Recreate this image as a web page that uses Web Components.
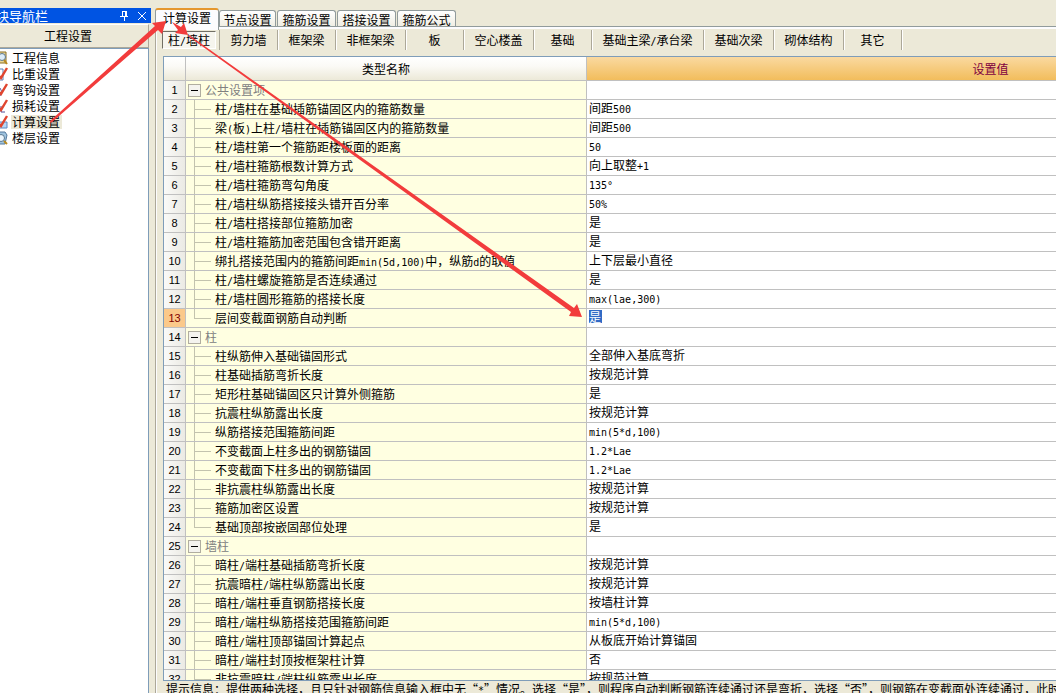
<!DOCTYPE html>
<html lang="zh-CN">
<head>
<meta charset="utf-8">
<title>计算设置</title>
<style>
html, body { height: 100%; margin: 0; }
body { font: 12px/16px "Noto Sans CJK SC", sans-serif; color: #000; background: #ece9d8; overflow: hidden; }
</style>
</head>
<body>
<settings-app></settings-app>
<script>
const LATIN = '.l{font-family:"DejaVu Sans Mono",monospace;font-size:10px;line-height:12px}';
const mix = s => s.replace(/[\x20-\x7e°]+/g, m => `<span class="l">${m}</span>`);
const RESET = `*{box-sizing:border-box}
button{font:inherit;color:inherit;background:none;border:0;margin:0;padding:0;white-space:nowrap;cursor:default}
${LATIN}`;
class Base extends HTMLElement {
  constructor() { super(); this.attachShadow({ mode: 'open' }); }
  connectedCallback() { this.shadowRoot.innerHTML = `<style>${RESET}${this.css()}</style>${this.html()}`; }
}

customElements.define('nav-item', class extends Base {
  css() { return `:host{display:flex;height:16px;align-items:center}
    svg{width:9px;height:16px;flex:none;margin-right:2px}
    a{color:inherit;text-decoration:none;padding:0 2px 0 1px;line-height:14px;height:14px;white-space:nowrap}
    :host([active]) a{background:#ece9d8}`; }
  html() {
    const tick = '<path d="M-2 9L1 12L7 2" fill="none" stroke="#e0452f" stroke-width="2.4"/>';
    const icons = {
      info: '<path d="M-1 2H6V13H-1" fill="#e8d79a" stroke="#8b6f22"/><circle cx="2" cy="7" r="3.5" fill="#dcecf8" stroke="#5a7890"/><path d="M4 10L7 14" stroke="#b88a20" stroke-width="2"/>',
      page: '<path d="M-1 3H3V14H-1" fill="#fff" stroke="#5b7db5"/>' + tick,
      hook: '<path d="M0 6L2 10L0 14" fill="none" stroke="#5b5fa8"/>' + tick,
      loss: '<path d="M1 8V14H5" fill="none" stroke="#4c4c98"/>' + tick,
      calc: '<path d="M-1 8H7V14H-1" fill="#b7d6f5" stroke="#5a8ac6"/>' + tick,
      floor: '<path d="M-1 2H5L7 5L5 14H-1Z" fill="#9ec3df" stroke="#55799c"/><circle cx="1" cy="8" r="3.5" fill="#eef6fc" stroke="#5a7890"/><path d="M4 11L7 14" stroke="#b88a20" stroke-width="2"/>'
    };
    return `<svg viewBox="0 0 9 16" aria-hidden="true">${icons[this.getAttribute('icon')]}</svg><a href="#"><slot></slot></a>`;
  }
});

customElements.define('nav-panel', class extends Base {
  css() { return `:host{display:flex;flex-direction:column;min-height:0;overflow:hidden}
    .bar{display:flex;align-items:center;height:15px;background:#0054e3;color:#fff;gap:8px;padding-right:4px;flex:none}
    .bar span{flex:1;font-size:13px;line-height:15px;margin-left:-4px;white-space:nowrap}
    .bar button{width:10px;height:11px;display:block}
    .bar svg{display:block}
    .head{height:24px;margin:1px 2px 0 0;border:1px solid #aca899;border-left:0;border-top-color:#fff;flex:none;padding-right:12px;text-align:center;line-height:20px}
    .list{flex:1;background:#fff;border-top:1px solid #7f9db9;border-right:1px solid #7f9db9;margin-right:2px;padding-top:1px}`; }
  html() { return `<div class="bar"><span>块导航栏</span>
    <button aria-label="固定"><svg width="10" height="11" fill="none" stroke="#fff"><path d="M3.5 1V6M3 1.5H7M6.5 1V6M7.5 1V6M1 6.5H9M5.5 7V11"/></svg></button>
    <button aria-label="关闭"><svg width="10" height="11" fill="none" stroke="#fff"><path d="M1 2L9 10M9 2L1 10"/></svg></button></div>
    <button class="head">工程设置</button><nav class="list"><slot></slot></nav>`; }
});

customElements.define('main-tabs', class extends Base {
  css() { return `:host{display:flex;align-items:flex-end;height:19px;gap:1px;flex:none}
    button{height:17px;width:59px;background:linear-gradient(#fff,#efede2);border:1px solid #919b9c;border-bottom:0;border-radius:3px 3px 0 0;line-height:15px}
    button:nth-of-type(2){width:57px}
    button[aria-selected=true]{width:64px;height:22px;margin-bottom:-3px;margin-right:-1px;background:#fcfcfe;border-top:2px solid #e5972d;line-height:12px;padding-bottom:5px;position:relative;z-index:1}`; }
  html() { return ['计算设置','节点设置','箍筋设置','搭接设置','箍筋公式'].map((t,i)=>`<button role="tab" aria-selected="${!i}">${t}</button>`).join(''); }
});

customElements.define('member-tabs', class extends Base {
  css() { return `:host{display:flex;height:20px;margin:1px 0 6px 6px;flex:none}
    button{flex:none;height:20px;border-right:1px solid #aca899;box-shadow:1px 0 #fff;line-height:20px}
    button:first-of-type{height:18px;margin:1px 3px 0 0;line-height:16px;border:1px solid #fff;border-top-color:#716f64;border-left-color:#716f64;background:#f6f5ee;box-shadow:none}
    button:nth-of-type(2){border-left:1px solid #aca899}`; }
  html() { return [['柱/墙柱',54],['剪力墙',59],['框架梁',58],['非框架梁',70],['板',58],['空心楼盖',70],['基础',58],['基础主梁/承台梁',112],['基础次梁',70],['砌体结构',70],['其它',58]]
    .map(([t,w])=>`<button style="width:${w}px">${mix(t)}</button>`).join(''); }
});

const ROWS = [['#公共设置项'],['柱/墙柱在基础插筋锚固区内的箍筋数量','间距500'],['梁(板)上柱/墙柱在插筋锚固区内的箍筋数量','间距500'],['柱/墙柱第一个箍筋距楼板面的距离','50'],['柱/墙柱箍筋根数计算方式','向上取整+1'],['柱/墙柱箍筋弯勾角度','135°'],['柱/墙柱纵筋搭接接头错开百分率','50%'],['柱/墙柱搭接部位箍筋加密','是'],['柱/墙柱箍筋加密范围包含错开距离','是'],['绑扎搭接范围内的箍筋间距min(5d,100)中，纵筋d的取值','上下层最小直径'],['柱/墙柱螺旋箍筋是否连续通过','是'],['柱/墙柱圆形箍筋的搭接长度','max(lae,300)'],['层间变截面钢筋自动判断','是'],
['#柱'],['柱纵筋伸入基础锚固形式','全部伸入基底弯折'],['柱基础插筋弯折长度','按规范计算'],['矩形柱基础锚固区只计算外侧箍筋','是'],['抗震柱纵筋露出长度','按规范计算'],['纵筋搭接范围箍筋间距','min(5*d,100)'],['不变截面上柱多出的钢筋锚固','1.2*Lae'],['不变截面下柱多出的钢筋锚固','1.2*Lae'],['非抗震柱纵筋露出长度','按规范计算'],['箍筋加密区设置','按规范计算'],['基础顶部按嵌固部位处理','是'],
['#墙柱'],['暗柱/端柱基础插筋弯折长度','按规范计算'],['抗震暗柱/端柱纵筋露出长度','按规范计算'],['暗柱/端柱垂直钢筋搭接长度','按墙柱计算'],['暗柱/端柱纵筋搭接范围箍筋间距','min(5*d,100)'],['暗柱/端柱顶部锚固计算起点','从板底开始计算锚固'],['暗柱/端柱封顶按框架柱计算','否'],['非抗震暗柱/端柱纵筋露出长度','按规范计算']];

customElements.define('settings-grid', class extends Base {
  css() { return `:host{display:block;overflow:hidden;background:#fff;border:1px solid #7f9db9;border-right:0}
    table{table-layout:fixed;border-collapse:separate;border-spacing:0;width:1231px}
    th,td{padding:0;font-weight:normal;border-right:1px solid #c0c0c0;border-bottom:1px solid #c0c0c0;white-space:nowrap;overflow:hidden}
    thead th{height:24px;background:linear-gradient(#fff,#fbfaf6 40%,#ece9d8)}
    thead th:last-child{background:linear-gradient(#fad9a0,#f2bd5c);color:#800040}
    tbody th{height:19px;background:linear-gradient(90deg,#fafaf8,#ebeae4);text-align:center;font:11px/17px "Liberation Sans",sans-serif}
    tr.cur th{background:#fbc98a;color:#800000}
    .name{background:#ffffe1}
    .name div{display:flex;height:18px;align-items:center;line-height:18px}
    .val div{height:18px;padding-left:2px;line-height:16px}
    svg{flex:none;width:29px;height:18px;stroke:#c3c3ae;fill:none}
    .group{color:#808080}
    .group button{width:13px;height:13px;margin:0 4px 0 2px;border:1px solid #b0ada0;background:#f4f3ee;display:grid;place-items:center}
    .group i{width:7px;height:1px;background:#000}
    mark{display:inline-block;height:13px;line-height:13px;background:#316ac5;color:#fff;padding-right:1px}`; }
  html() {
    const body = ROWS.map(([n, v = ''], i) => {
      const last = ROWS[i + 1] && ROWS[i + 1][0][0] === '#';
      const name = n[0] === '#'
        ? `<div class="group"><button aria-label="折叠"><i></i></button>${n.slice(1)}</div>`
        : `<div><svg aria-hidden="true"><path d="M8.5 0V${last ? 9 : 18}M8 9.5H25"/></svg><span>${mix(n)}</span></div>`;
      const cur = i === 12;
      return `<tr${cur ? ' class="cur"' : ''}><th scope="row">${i + 1}</th><td class="name">${name}</td><td class="val"><div>${cur ? `<mark>${v}</mark>` : mix(v)}</div></td></tr>`;
    }).join('');
    return `<table><colgroup><col style="width:22px"><col style="width:401px"><col style="width:808px"></colgroup>
      <thead><tr><th></th><th scope="col">类型名称</th><th scope="col">设置值</th></tr></thead><tbody>${body}</tbody></table>`;
  }
});

customElements.define('hint-bar', class extends Base {
  css() { return `:host{display:block;height:12px;line-height:16px;overflow:hidden;white-space:nowrap;padding-left:2px}`; }
  html() { return mix('提示信息：提供两种选择，且只针对钢筋信息输入框中无“*”情况。选择“是”，则程序自动判断钢筋连续通过还是弯折，选择“否”，则钢筋在变截面处连续通过，此时'); }
});

customElements.define('pointer-arrows', class extends Base {
  css() { return `:host{position:absolute;left:0;top:0;width:600px;height:340px;pointer-events:none;z-index:5} svg{display:block}`; }
  html() { return `<svg width="600" height="340" fill="#f23c3c" aria-hidden="true">
    <path d="M50 121L155 26L152 23L166 21L162 34L158 30L51 123Z"/>
    <path d="M172 22L181 27L184 23L188 35L175 33L178 30Z"/>
    <path d="M188 36L189 35L574 308L577 304L582 317L569 316L571 312Z"/></svg>`; }
});

customElements.define('settings-app', class extends Base {
  css() { return `:host{display:grid;grid-template-columns:151px minmax(0,1fr);column-gap:4px;height:100vh;padding-top:8px;box-sizing:border-box;position:relative;overflow:hidden}
    main{display:flex;flex-direction:column;min-width:0;min-height:0}
    .page{flex:1;min-height:0;display:flex;flex-direction:column;border-top:1px solid #919b9c;border-left:1px solid #aca899;box-shadow:inset 0 2px #fcfcfe,inset 1px 0 #fcfcfe;padding-top:2px;margin-top:-1px}
    settings-grid{flex:1;min-height:0;margin-left:7px}
    hint-bar{flex:none;margin-left:8px}`; }
  html() { return `<nav-panel>
      <nav-item icon="info">工程信息</nav-item><nav-item icon="page">比重设置</nav-item><nav-item icon="hook">弯钩设置</nav-item>
      <nav-item icon="loss">损耗设置</nav-item><nav-item icon="calc" active>计算设置</nav-item><nav-item icon="floor">楼层设置</nav-item></nav-panel>
    <main><main-tabs role="tablist"></main-tabs><div class="page"><member-tabs></member-tabs><settings-grid></settings-grid><hint-bar></hint-bar></div></main>
    <pointer-arrows></pointer-arrows>`; }
});
</script>
</body>
</html>
